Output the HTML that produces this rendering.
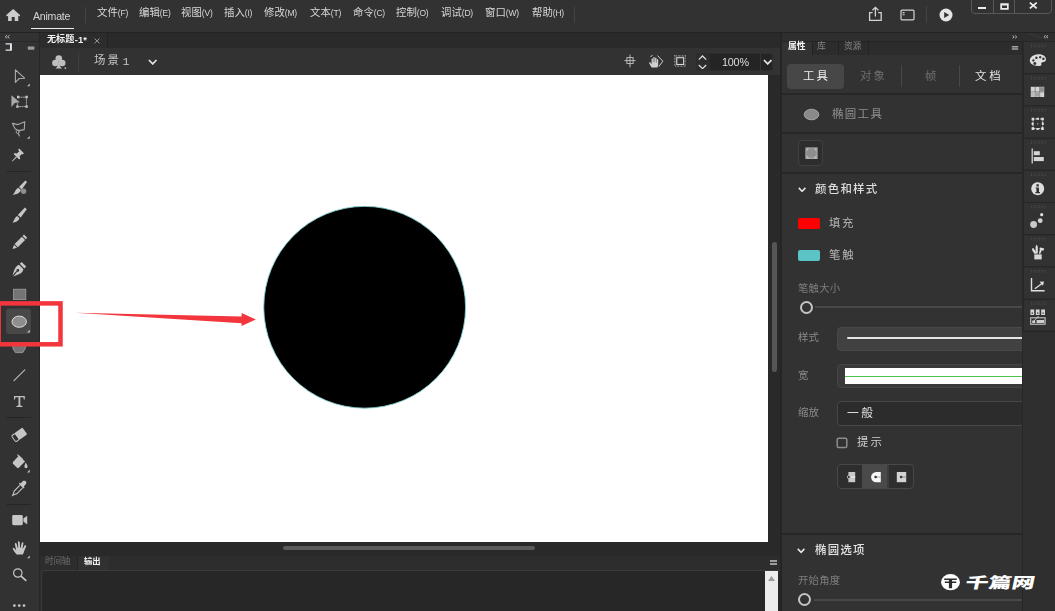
<!DOCTYPE html>
<html lang="zh-CN">
<head>
<meta charset="utf-8">
<title>Animate</title>
<style>
*{box-sizing:border-box;margin:0;padding:0}
html,body{width:1055px;height:611px;overflow:hidden;background:#323232}
body{position:relative;font-family:"Liberation Sans",sans-serif;font-size:10px;color:#d2d2d2;line-height:1}
.a{position:absolute}
.gs{will-change:transform}
.t{display:block;font-family:"Liberation Sans","Noto Sans CJK SC",sans-serif;font-style:normal;font-weight:normal;line-height:1;white-space:nowrap;color:inherit}
.hv .t{font-weight:500}
.lbl{will-change:transform;position:absolute;display:flex;align-items:center;white-space:nowrap}
.ln{position:absolute;background:#262626}
svg{display:block}
/* ---------- menu bar ---------- */
#menubar{left:0;top:0;width:1055px;height:32px;background:#323232}
.mi{will-change:transform;position:absolute;top:7.3px;height:12px;display:flex;align-items:center;color:#d8d8d8}
.mi span{font-size:8.5px;letter-spacing:-.2px;margin-left:0;position:relative;top:.5px}
/* ---------- left toolbar ---------- */
#tools{left:0;top:33px;width:40px;height:578px;background:#323232;border-right:1px solid #272727}
/* ---------- document area ---------- */
#tabstrip{left:40px;top:33px;width:741px;height:15px;background:#2a2a2a}
#scenebar{left:40px;top:48px;width:741px;height:27px;background:#323232}
#paste{left:40px;top:75px;width:741px;height:481px;background:#292929}
#stage{left:40px;top:75px;width:728px;height:467px;background:#fff;overflow:hidden}
/* ---------- bottom panel ---------- */
#bottom{left:40px;top:556px;width:741px;height:55px;background:#2e2e2e}
/* ---------- right panel ---------- */
#gap{left:780px;top:33px;width:2px;height:578px;background:#252525}
#props{left:782px;top:33px;width:240px;height:578px;background:#323232;overflow:hidden}
#strip{left:1021.6px;top:33px;width:33.4px;height:578px;background:#323232;border-left:2px solid #282828}
</style>
</head>
<body>

<!-- ======================= MENU BAR ======================= -->
<div id="menubar" class="a">
  <svg class="a" style="left:5.6px;top:9px" width="14.4" height="12.2" viewBox="0 0 14.4 12.2"><path d="M7.2 0 L0 6.3 L1 7.4 L2.1 6.5 V12.2 H5.7 V8.1 H8.7 V12.2 H12.3 V6.5 L13.4 7.4 L14.4 6.3 Z" fill="#cdcdcd"/></svg>
  <div class="a gs" id="appname" style="left:33px;top:10.5px;font-size:10.6px;color:#d4d4d4;letter-spacing:-.25px">Animate</div>
  <div class="a" style="left:30.7px;top:27.7px;width:43.2px;height:1.6px;background:#ececec"></div>
  <div class="a" style="left:85px;top:7px;width:1px;height:16px;background:#444"></div>
  <div class="mi" style="left:97.3px"><i class="t" style="font-size:10.4px;width:20.8px">文件</i><span>(F)</span></div>
  <div class="mi" style="left:138.7px"><i class="t" style="font-size:10.4px;width:20.8px">编辑</i><span>(E)</span></div>
  <div class="mi" style="left:181.3px"><i class="t" style="font-size:10.4px;width:20.8px">视图</i><span>(V)</span></div>
  <div class="mi" style="left:224.3px"><i class="t" style="font-size:10.4px;width:20.8px">插入</i><span>(I)</span></div>
  <div class="mi" style="left:264.4px"><i class="t" style="font-size:10.4px;width:20.8px">修改</i><span>(M)</span></div>
  <div class="mi" style="left:309.9px"><i class="t" style="font-size:10.4px;width:20.8px">文本</i><span>(T)</span></div>
  <div class="mi" style="left:352.5px"><i class="t" style="font-size:10.4px;width:20.8px">命令</i><span>(C)</span></div>
  <div class="mi" style="left:395.5px"><i class="t" style="font-size:10.4px;width:20.8px">控制</i><span>(O)</span></div>
  <div class="mi" style="left:440.5px"><i class="t" style="font-size:10.4px;width:20.8px">调试</i><span>(D)</span></div>
  <div class="mi" style="left:484.6px"><i class="t" style="font-size:10.4px;width:20.8px">窗口</i><span>(W)</span></div>
  <div class="mi" style="left:531.8px"><i class="t" style="font-size:10.4px;width:20.8px">帮助</i><span>(H)</span></div>
  <div class="a" style="left:574px;top:7px;width:1px;height:16px;background:#444"></div>
  <!-- share -->
  <svg class="a" style="left:868px;top:6px" width="15" height="16" viewBox="0 0 15 16" fill="none" stroke="#d2d2d2" stroke-width="1.3"><path d="M4.6 6.6 H1.6 V14.3 H13.2 V6.6 H10.2"/><path d="M7.4 10.6 V1.4 M4.4 4.2 L7.4 1.3 L10.4 4.2"/></svg>
  <!-- workspace -->
  <svg class="a" style="left:900px;top:9px" width="15" height="12" viewBox="0 0 15 12" fill="none" stroke="#d2d2d2" stroke-width="1.2"><rect x="1" y="1.2" width="13" height="9.6" rx="1"/><path d="M2.6 3.6 H4.6 M2.6 5.8 H4.6" stroke-width="1.1"/></svg>
  <div class="a" style="left:926px;top:6px;width:1px;height:17px;background:#444"></div>
  <!-- play -->
  <svg class="a" style="left:938.6px;top:7.5px" width="14" height="14" viewBox="0 0 14 14"><circle cx="7" cy="7" r="6.5" fill="#e4e4e4"/><path d="M5.2 3.9 L10.2 7 L5.2 10.1 Z" fill="#323232"/></svg>
  <!-- window controls -->
  <div class="a" style="left:970.5px;top:-2px;width:81px;height:15.6px;border:1px solid #585858;border-radius:0 0 4px 4px"></div>
  <div class="a" style="left:993px;top:0;width:1px;height:13px;background:#585858"></div>
  <div class="a" style="left:1014px;top:0;width:1px;height:13px;background:#585858"></div>
  <div class="a" style="left:978px;top:6.6px;width:8.4px;height:2.4px;background:#ededed"></div>
  <svg class="a" style="left:999.6px;top:2.6px" width="9" height="7" viewBox="0 0 9 7"><path fill-rule="evenodd" d="M.3 .2 H8.7 V6.7 H.3 Z M2 2.6 V5 H7 V2.6 Z" fill="#ededed"/></svg>
  <svg class="a" style="left:1029.2px;top:2.4px" width="8.6" height="7.2" viewBox="0 0 10 8" fill="none" stroke="#ededed" stroke-width="2.1"><path d="M1 .6 L9 7.2 M9 .6 L1 7.2"/></svg>
</div>
<div class="ln" style="left:0;top:32px;width:1055px;height:1px;background:#232323"></div>

<!-- ======================= LEFT TOOLBAR ======================= -->
<div id="tools" class="a">
  <svg class="a" style="left:0;top:0" width="40" height="578" viewBox="0 33 40 578">
    <g fill="none" stroke="#c6c6c6" stroke-width="1.1" stroke-linejoin="round" stroke-linecap="round">
      <!-- collapse chevrons -->
      <path d="M6.8 35.5 L5.2 36.8 L6.8 38.1 M9.2 35.5 L7.6 36.8 L9.2 38.1" stroke-width=".9" stroke="#bdbdbd"/>
      <!-- selection (outline arrow) -->
      <path d="M15.4 69.8 L24.6 78.2 L19.2 78.5 L15.4 82.4 Z" stroke="#adadad"/>
      <!-- free transform -->
      <path d="M18.2 97.2 H26.4 V106.6 H17.4 V103.5" stroke-dasharray="1.4 1.2" stroke="#ababab" stroke-width=".9"/>
      <!-- lasso -->
      <path d="M12.4 123.4 L18 124.6 L24.8 121.8 L24.2 129.6 L18.8 130.6 L15.2 129 Z" stroke="#a9a9a9"/>
      <circle cx="17.6" cy="132" r="1.5" stroke="#a9a9a9" stroke-width=".9"/>
      <path d="M18.2 133.4 L19.4 136" stroke="#a9a9a9"/>
      <!-- line tool -->
      <path d="M14 380.6 L24.8 369.8" stroke-width="1.2" stroke="#b4b4b4"/>
      <!-- magnifier -->
      <circle cx="17.8" cy="573" r="4.2" stroke-width="1.2"/>
      <path d="M21 576.2 L25.8 580.4" stroke-width="1.7"/>
    </g>
    <g fill="#c6c6c6">
      <!-- toggle icons -->
      <path d="M5.6 43.2 H11.9 V50.8 H5.6 V49.4 H10 V44.6 H5.6 Z" fill="#e2e6ee"/>
      <rect x="27.8" y="46.6" width="6.6" height="3.1" rx=".6" fill="#9a9a9a"/>
      <!-- sub-tool corner triangles -->
      <path d="M29.8 83.4 V86.2 H27 Z M29.8 136 V138.8 H27 Z M29.8 329.8 V332.6 H27 Z M29.8 469.6 V472.4 H27 Z M29.8 555.4 V558.2 H27 Z" fill="#b8b8b8"/>
      <!-- free transform: arrow + handles -->
      <path d="M11.4 95.2 L19.8 102.2 L14.8 102.9 L11.4 106.9 Z" fill="#a9a9a9"/>
      <path d="M17 95.8 h2.4 v2.4 h-2.4z M25.4 95.8 h2.4 v2.4 h-2.4z M25.4 105.4 h2.4 v2.4 h-2.4z M16.2 105.4 h2.4 v2.4 h-2.4z"/>
      <!-- pin -->
      <path d="M19.2 148.6 L23.9 153.3 L22.7 154.5 L21.9 153.9 L19.6 156.3 L20.3 158.5 L19.2 159.6 L13.6 154 L14.7 152.9 L16.9 153.6 L19.3 151.3 L18.1 149.8 Z"/>
      <path d="M16 156.4 L16.9 157.3 L12.4 161.4 L11.9 160.9 Z"/>
      <!-- fluid brush -->
      <circle cx="23.6" cy="191.2" r="2.7" fill="#8e8e8e"/>
      <path d="M25.4 180.6 L27 182 L21.7 189.5 L19 187.1 Z"/>
      <path d="M18.3 187.7 L21 190.1 C19.8 193.4 16.4 194.9 12.7 194.7 C14.9 192.9 15.1 189.5 18.3 187.7 Z"/>
      <!-- brush -->
      <path d="M24.9 207.6 L26.8 209.2 L20.7 217.5 L17.8 215 Z"/>
      <path d="M17.1 216.1 L19.5 218.2 C18.6 221 15.6 222.4 12.5 222.4 C14.6 220.7 14.4 217.7 17.1 216.1 Z"/>
      <!-- pencil -->
      <path d="M24 234.6 L27.2 237.8 L25.8 239.2 L22.6 236 Z M21.9 236.7 L25.1 239.9 L17.8 247.2 L14.6 244 Z M14 244.8 L17 247.8 L12.5 249 Z"/>
      <!-- pen -->
      <path d="M21.6 262 L26.2 266.6 L24.4 268.4 L19.8 263.8 Z"/>
      <path d="M19 264.8 L23.4 269.2 C22.6 272.6 20.4 274 13.2 276.4 L17.4 271.6 A1.3 1.3 0 1 0 16.6 270.8 L12.4 275.6 C14.6 268.6 16 266 19 264.8 Z"/>
      <!-- rectangle tool -->
      <rect x="13.4" y="289.2" width="12.4" height="10.4" fill="#747474" stroke="#9c9c9c" stroke-width=".8"/>
      <!-- text tool -->
      <path d="M14 396 H24.8 V399.4 H23.8 L23.4 397.3 H20.3 V405.6 L22.4 406.1 V407.1 H16.4 V406.1 L18.5 405.6 V397.3 H15.4 L15 399.4 H14 Z" fill="#c0c0c0"/>
      <!-- eraser -->
      <g transform="rotate(-36 19.4 434.8)"><rect x="16.3" y="430.6" width="9.8" height="8.4" rx="1.2"/><rect x="12.3" y="431.1" width="4.6" height="7.4" rx="1.2" fill="none" stroke="#c6c6c6" stroke-width="1"/></g>
      <!-- paint bucket -->
      <path d="M13 462 L19 455.6 L25 461.4 L18.8 467.8 Q17.8 468.6 16.8 467.6 L13 463.8 Q12.4 462.8 13 462 Z"/>
      <path d="M17.4 454.6 L22.6 459.4" fill="none" stroke="#c6c6c6" stroke-width="1.1"/>
      <path d="M25.6 462.4 C26.8 464.4 27.6 465.4 27.6 466.6 A1.6 1.6 0 0 1 24.4 466.6 C24.4 465.4 25 464.4 25.6 462.4 Z"/>
      <!-- eyedropper -->
      <path d="M23.6 480.8 Q25.4 480.4 26.2 481.8 Q26.8 483.4 25.6 484.6 L23.8 486.4 L24.6 487.2 L23.4 488.4 L18.8 483.8 L20 482.6 L20.8 483.4 L22.4 481.6 Q23 481 23.6 480.8 Z"/>
      <path d="M19.8 485.4 L14.2 491 L13.4 493.6 L12.6 495.4 L14.4 494.6 L16.8 493.8 L22.4 488.2" fill="none" stroke="#c6c6c6" stroke-width="1.1"/>
      <!-- camera -->
      <rect x="12.2" y="515" width="10.6" height="10.2" rx="1.4"/>
      <path d="M23.4 518.6 L27.2 515.8 V524.4 L23.4 521.6 Z"/>
      <!-- hand -->
      <path d="M16.6 554.6 C15.2 552.8 14 551.2 12.8 549.2 C12.3 548.2 13.7 547.4 14.5 548.4 L16.2 550.4 L14.9 544.2 C14.6 543 16.3 542.6 16.6 543.8 L17.8 548 L18.2 547.9 L17.9 542.3 C17.8 541.1 19.6 541 19.7 542.2 L20.1 547.8 L20.6 547.8 L21.7 542.9 C22 541.7 23.7 542.1 23.4 543.3 L22.5 548.4 L22.9 548.6 L24.6 545.6 C25.2 544.6 26.6 545.4 26.1 546.5 L24.2 551 C23.8 552.6 23.4 553.6 22.8 554.6 Z"/>
      <!-- more -->
      <circle cx="14.4" cy="605.6" r="1.35"/><circle cx="19.2" cy="605.6" r="1.35"/><circle cx="24" cy="605.6" r="1.35"/>
    </g>
    <!-- selected tool (oval) -->
    <rect x="6.1" y="308.6" width="24.8" height="25.4" rx="3" fill="#484848"/>
    <ellipse cx="19.2" cy="321.7" rx="7.2" ry="5.6" fill="#8e8e8e" stroke="#dedede" stroke-width="1"/>
    <path d="M29.8 329.8 V332.6 H27 Z" fill="#c0c0c0"/>
    <!-- polystar (mostly hidden behind highlight) -->
    <path d="M12.9 343.6 H25.3 V348.4 L22.8 352.6 H15.4 L12.9 348.4 Z" fill="#747474" stroke="#a4a4a4" stroke-width=".8"/>
    <!-- separators -->
    <path d="M0 41.5 H40" stroke="#282828" stroke-width="1"/>
    <path d="M6.5 171.5 H31 M6.5 417.5 H31 M6.5 504.5 H31" stroke="#252525" stroke-width="1.1"/>
  </svg>
</div>

<!-- ======================= DOCUMENT AREA ======================= -->
<div id="tabstrip" class="a">
  <div class="a" style="left:0;top:0;width:68px;height:15px;background:#2c2c2c;border-right:1px solid #222"></div>
  <div class="lbl" style="left:7.4px;top:2.2px;height:9px;color:#f2f2f2"><i class="t" style="font-size:9.1px;font-weight:bold;width:27.3px">无标题</i><span style="font-weight:bold;font-size:9.4px;margin-left:.4px;letter-spacing:.1px;position:relative;top:.2px">-1*</span></div>
  <svg class="a" style="left:54.4px;top:5.2px" width="6" height="6" viewBox="0 0 6 6" fill="none" stroke="#a6a6a6" stroke-width=".9"><path d="M.5 .5 L5.5 5.3 M5.5 .5 L.5 5.3"/></svg>
</div>
<div id="scenebar" class="a">
  <svg class="a" style="left:12.4px;top:7.4px" width="14.4" height="14" viewBox="0 0 14.4 14"><g fill="#bebebe"><circle cx="6.8" cy="3.5" r="3.3"/><circle cx="3.4" cy="8" r="3.3"/><circle cx="10.2" cy="8" r="3.3"/><path d="M6.2 7 H7.4 C7.4 10.4 8.2 12 10 13.4 H3.6 C5.4 12 6.2 10.4 6.2 7 Z"/><rect x="12.6" y="12.4" width="1.5" height="1.5"/></g></svg>
  <div class="a" style="left:38px;top:4.5px;width:1px;height:18px;background:#404040"></div>
  <div class="lbl" style="left:54.2px;top:7.3px;height:12px;color:#c6c6c6"><i class="t" style="font-size:11.4px;letter-spacing:2.2px;width:25px">场景</i><span style="font-family:'Liberation Mono',monospace;font-size:11.5px;margin-left:3.6px;position:relative;top:.4px">1</span></div>
  <svg class="a" style="left:108.4px;top:11px" width="9.4" height="6.4" viewBox="0 0 9.4 6.4" fill="none" stroke="#e2e2e2" stroke-width="1.7"><path d="M.9 1 L4.7 4.9 L8.5 1"/></svg>
  <!-- centre stage -->
  <svg class="a" style="left:583.6px;top:6.4px" width="12" height="13.6" viewBox="0 0 12 13.6" fill="none" stroke="#c4c4c4" stroke-width=".9"><rect x="2.9" y="3.6" width="6.2" height="6"/><path d="M6 .6 V13.4 M.4 6.6 H11.6"/></svg>
  <!-- rotate / hand -->
  <svg class="a" style="left:607.6px;top:6.4px" width="16" height="14" viewBox="0 0 16 14"><path d="M3.6 13.6 C2.8 12 2 10.8 1.2 9.2 C.9 8.4 2 7.8 2.6 8.7 L3.6 10.2 V5 C3.6 4 4.9 4 4.9 5 V8.2 H5.3 V3.7 C5.3 2.7 6.7 2.7 6.7 3.7 V8.2 H7.1 V4.3 C7.1 3.3 8.5 3.3 8.5 4.3 V8.5 H8.9 V5.8 C8.9 4.8 10.2 4.8 10.2 5.8 V10.6 C10.2 12 9.7 12.8 9.2 13.6 Z" fill="#cfcfcf"/><path d="M9.6 1.6 L14.8 7.2 L10.8 12.6" fill="none" stroke="#cfcfcf" stroke-width="1"/><path d="M2.6 3 L4.6 .9" fill="none" stroke="#cfcfcf" stroke-width="1"/></svg>
  <!-- clip content -->
  <svg class="a" style="left:634px;top:7.4px" width="12.4" height="12.2" viewBox="0 0 13.6 13.2" fill="none"><rect x=".9" y=".9" width="11.8" height="11.4" stroke="#8e8e8e" stroke-width="1.8" stroke-dasharray=".8 .8"/><rect x="3" y="2.9" width="7.6" height="7.4" stroke="#d8d8d8" stroke-width="1.2"/></svg>
  <!-- zoom spinner + box -->
  <div class="a" style="left:656px;top:5px;width:14px;height:17.6px;background:#2c2c2c;border-radius:3px 0 0 3px"></div>
  <svg class="a" style="left:657.8px;top:6.6px" width="9" height="14.6" viewBox="0 0 9 14.6" fill="none" stroke="#dcdcdc" stroke-width="1.3"><path d="M.8 4.6 L4.5 1 L8.2 4.6 M.8 10 L4.5 13.6 L8.2 10"/></svg>
  <div class="a" style="left:669.4px;top:5px;width:63.6px;height:17.6px;background:#242424;border-radius:3px;border:1px solid #2d2d2d"></div>
  <div class="a" style="left:720px;top:5.4px;width:1px;height:16.8px;background:#353535"></div>
  <div class="a gs" id="zoomtxt" style="left:682px;top:8.6px;font-size:10.8px;color:#dedede;letter-spacing:-.2px">100%</div>
  <svg class="a" style="left:722.6px;top:11px" width="9.4" height="6.4" viewBox="0 0 9.4 6.4" fill="none" stroke="#e6e6e6" stroke-width="1.7"><path d="M.9 1 L4.7 4.9 L8.5 1"/></svg>
</div>
<div id="paste" class="a">
  <div class="a" style="left:732px;top:167px;width:5px;height:130px;background:#565656;border-radius:2.5px"></div>
  <div class="a" style="left:242.5px;top:470.6px;width:252px;height:4px;background:#5a5a5a;border-radius:2px"></div>
</div>
<div id="stage" class="a">
  <svg class="a" style="left:0;top:0" width="728" height="467" viewBox="40 75 728 467">
    <circle cx="364.65" cy="307.25" r="100.9" fill="#000" stroke="#86d2d2" stroke-width=".9"/>
    <path d="M75 312.8 L241.6 316.6 L241.7 313 L255.8 319.4 L241.5 326.1 L241.6 323.2 Z" fill="#f3363d"/>
  </svg>
</div>

<!-- ======================= BOTTOM PANEL ======================= -->
<div id="bottom" class="a">
  <div class="a" style="left:0;top:0;width:741px;height:14px;background:#2d2d2d"></div>
  <div class="a" style="left:37.4px;top:0;width:32px;height:14.6px;background:#313131;border-left:1px solid #252525"></div>
  <div class="lbl" style="left:5.4px;top:.2px;height:10px;color:#6c6c6c"><i class="t" style="font-size:8.6px;letter-spacing:-.2px;width:25.4px">时间轴</i></div>
  <div class="lbl" style="left:43.6px;top:.2px;height:10px;color:#f4f4f4"><i class="t" style="font-size:8.4px;font-weight:bold;letter-spacing:-.2px;width:16.6px">输出</i></div>
  <div class="a" style="left:730.4px;top:4px;width:7px;height:1.6px;background:#9c9c9c"></div>
  <div class="a" style="left:730.4px;top:7px;width:7px;height:1.6px;background:#9c9c9c"></div>
  <div class="a" style="left:1px;top:14px;width:740px;height:41px;background:#272727;border-top:1px solid #3c3c3c;border-left:1px solid #3a3a3a;border-top-left-radius:4px"></div>
  <div class="a" style="left:725px;top:15px;width:13px;height:40px;background:#ececec"></div>
  <svg class="a" style="left:728px;top:19.6px" width="7" height="5" viewBox="0 0 7 5"><path d="M3.5 0 L7 5 H0 Z" fill="#9a9a9a"/></svg>
</div>

<!-- ======================= RIGHT PANEL ======================= -->
<div id="gap" class="a"></div>
<div id="props" class="a">
  <div class="a" style="left:0px;top:0px;width:240px;height:8px;background:#2e2e2e"></div>
  <div class="a" style="left:0px;top:8px;width:240px;height:1px;background:#242424"></div>
  <div class="a" style="left:0px;top:9px;width:240px;height:13px;background:#2c2c2c"></div>
  <div class="a" style="left:0px;top:9px;width:30px;height:13.4px;background:#323232"></div>
  <div class="a" style="left:30px;top:9px;width:1px;height:13px;background:#222"></div>
  <div class="a" style="left:56px;top:9px;width:1px;height:13px;background:#222"></div>
  <div class="a" style="left:86px;top:9px;width:1px;height:13px;background:#242424"></div>
  <svg class="a" style="left:230px;top:2px" width="6" height="4" viewBox="0 0 6 4" fill="none" stroke="#c4c4c4" stroke-width=".9"><path d="M.6 .5 L2.2 1.9 L.6 3.3 M3.2 .5 L4.8 1.9 L3.2 3.3"/></svg>
  <div class="lbl" style="left:5.6px;top:9.4px;height:9px;color:#f6f6f6"><i class="t" style="font-size:8.8px;font-weight:bold;width:17.6px">属性</i></div>
  <div class="lbl" style="left:34.6px;top:9.4px;height:9px;color:#858585"><i class="t" style="font-size:8.8px;width:8.8px">库</i></div>
  <div class="lbl" style="left:62.2px;top:9.4px;height:9px;color:#858585"><i class="t" style="font-size:8.8px;letter-spacing:-.3px;width:17.3px">资源</i></div>
  <svg class="a" style="left:229px;top:12px" width="8" height="6" viewBox="1011 45 8 6"><path d="M1011.8 45.9 h6.4 v1.5 h-6.4z M1011.8 48.3 h6.4 v1.5 h-6.4z" fill="#a4a4a4"/></svg>
  <div class="a" style="left:5px;top:30.8px;width:57.4px;height:25px;background:#474747;border-radius:4px"></div>
  <div class="a" style="left:119.4px;top:32px;width:1px;height:22px;background:#484848"></div>
  <div class="a" style="left:177.4px;top:32px;width:1px;height:22px;background:#484848"></div>
  <div class="lbl" style="left:21.3px;top:37.8px;height:12px;color:#efefef"><i class="t" style="font-size:11.4px;letter-spacing:2.2px;width:25px">工具</i></div>
  <div class="lbl" style="left:78.3px;top:37.8px;height:12px;color:#6f6f6f"><i class="t" style="font-size:11.4px;letter-spacing:2.2px;width:25px">对象</i></div>
  <div class="lbl" style="left:142.8px;top:37.8px;height:12px;color:#6f6f6f"><i class="t" style="font-size:11.4px;width:11.4px">帧</i></div>
  <div class="lbl" style="left:193.2px;top:37.8px;height:12px;color:#e4e4e4"><i class="t" style="font-size:11.4px;letter-spacing:2.8px;width:25.6px">文档</i></div>
  <div class="a" style="left:0px;top:60.4px;width:240px;height:1.6px;background:#272727"></div>
  <svg class="a" style="left:21px;top:75px" width="17" height="13" viewBox="0 0 17 13"><ellipse cx="8.5" cy="6.5" rx="7.3" ry="5.3" fill="#8a8a8a" stroke="#b4b4b4" stroke-width=".8"/></svg>
  <div class="lbl" style="left:50.3px;top:75.6px;height:12px;color:#8f8f8f"><i class="t" style="font-size:11.5px;letter-spacing:1.3px;width:49.9px">椭圆工具</i></div>
  <div class="a" style="left:0px;top:99.2px;width:240px;height:1.6px;background:#272727"></div>
  <div class="a" style="left:16.2px;top:107.2px;width:25px;height:25.6px;background:#2d2d2d;border:1px solid #414141;border-radius:4px"></div>
  <svg class="a" style="left:22.7px;top:114.3px" width="13" height="12.4" viewBox="0 0 13 12.4"><rect x=".5" y=".5" width="12" height="11.4" fill="#cdcdcd"/><rect x="1.3" y="1.3" width="10.4" height="9.8" fill="none" stroke="#8c8c8c" stroke-width=".6"/><ellipse cx="6.5" cy="6.2" rx="5.2" ry="4.9" fill="#8e8e8e"/></svg>
  <div class="a" style="left:0px;top:139px;width:240px;height:1.6px;background:#272727"></div>
  <svg class="a" style="left:15.6px;top:153.8px" width="8.2" height="5.6" viewBox="0 0 9.4 6.4" fill="none" stroke="#e6e6e6" stroke-width="1.8"><path d="M.9 1 L4.7 4.9 L8.5 1"/></svg>
  <div class="lbl hv" style="left:32.6px;top:150.8px;height:12px;color:#dedede"><i class="t" style="font-size:11.4px;letter-spacing:1.3px;width:62.2px">颜色和样式</i></div>
  <div class="a" style="left:16.3px;top:185.3px;width:22px;height:11px;background:#ff0000;border-radius:1.5px"></div>
  <div class="lbl" style="left:47.4px;top:185.4px;height:12px;color:#b6b6b6"><i class="t" style="font-size:11.4px;letter-spacing:1.7px;width:24.5px">填充</i></div>
  <div class="a" style="left:16.3px;top:217px;width:22px;height:10.8px;background:#5cc4c6;border-radius:2px"></div>
  <div class="lbl" style="left:47.4px;top:216.8px;height:12px;color:#b6b6b6"><i class="t" style="font-size:11.4px;letter-spacing:1.9px;width:24.7px">笔触</i></div>
  <div class="lbl" style="left:16px;top:250.8px;height:11px;color:#7d7d7d"><i class="t" style="font-size:10.4px;letter-spacing:.2px;width:42.2px">笔触大小</i></div>
  <div class="a" style="left:33.4px;top:273px;width:210px;height:2px;background:#484848"></div>
  <div class="a" style="left:17.7px;top:267.8px;width:13px;height:13px;border:2px solid #c4c4c4;border-radius:50%"></div>
  <div class="lbl" style="left:16px;top:300px;height:11px;color:#8a8a8a"><i class="t" style="font-size:10.4px;letter-spacing:.2px;width:21px">样式</i></div>
  <div class="a" style="left:54.9px;top:293.5px;width:200px;height:24.4px;background:#414141;border:1px solid #484848;border-radius:4px"></div>
  <div class="a" style="left:64.6px;top:304px;width:190px;height:2px;background:#e6e6e6;border-radius:1px"></div>
  <div class="lbl" style="left:16px;top:337.6px;height:11px;color:#8a8a8a"><i class="t" style="font-size:10.4px;width:10.4px">宽</i></div>
  <div class="a" style="left:54.9px;top:330.6px;width:200px;height:24.8px;background:#3a3a3a;border:1px solid #464646;border-radius:4px"></div>
  <div class="a" style="left:62.7px;top:335.3px;width:190px;height:15.7px;background:#ffffff"></div>
  <div class="a" style="left:62.7px;top:342.5px;width:190px;height:1.6px;background:#4cc44c"></div>
  <div class="lbl" style="left:15.6px;top:374.8px;height:11px;color:#8a8a8a"><i class="t" style="font-size:10.4px;letter-spacing:.2px;width:21px">缩放</i></div>
  <div class="a" style="left:54.9px;top:367.9px;width:200px;height:25.6px;background:#2c2c2c;border:1px solid #474747;border-radius:4px"></div>
  <div class="lbl" style="left:64.8px;top:375.2px;height:12px;color:#e0e0e0"><i class="t" style="font-size:11.8px;letter-spacing:2.4px;width:26px">一般</i></div>
  <svg class="a" style="left:54.4px;top:403.5px" width="12" height="12" viewBox="0 0 12 12"><rect x="1.2" y="1.2" width="9.6" height="9.4" rx="1.4" fill="none" stroke="#8c8c8c" stroke-width="1.5"/></svg>
  <div class="lbl" style="left:74.6px;top:403.6px;height:12px;color:#d0d0d0"><i class="t" style="font-size:11.4px;letter-spacing:2px;width:24.8px">提示</i></div>
  <div class="a" style="left:54.8px;top:431px;width:77.2px;height:24.8px;background:#2e2e2e;border:1px solid #484848;border-radius:4px"></div>
  <div class="a" style="left:80px;top:431.6px;width:25px;height:23.8px;background:#4a4a4a"></div>
  <div class="a" style="left:105px;top:431.6px;width:1.6px;height:23.8px;background:#3c3c3c"></div>
  <svg class="a" style="left:64px;top:438px" width="64" height="12" viewBox="846 471 64 12">
    <rect x="848.4" y="472" width="6.8" height="10.2" fill="#c9c9c9"/><rect x="850.4" y="476.3" width="4.8" height="1.4" fill="#e8e8e8"/><circle cx="848.8" cy="477" r="1.5" fill="#2e2e2e" stroke="#d8d8d8" stroke-width=".7"/>
    <path d="M880.8 471.9 H876.2 A5.15 5.15 0 0 0 876.2 482.2 H880.8 Z" fill="#f6f6f6"/><rect x="875.6" y="476.4" width="5.2" height="1.3" fill="#b8b8b8"/><circle cx="875.6" cy="477" r="1.3" fill="#333"/>
    <rect x="896.8" y="472" width="9.4" height="10.2" fill="#d2d2d2"/><rect x="901" y="476.4" width="5.2" height="1.3" fill="#9c9c9c"/><circle cx="901.1" cy="477" r="1.3" fill="#333"/>
  </svg>
  <div class="a" style="left:0px;top:500.2px;width:240px;height:1.4px;background:#272727"></div>
  <svg class="a" style="left:15.3px;top:515px" width="8.2" height="5.6" viewBox="0 0 9.4 6.4" fill="none" stroke="#e6e6e6" stroke-width="1.8"><path d="M.9 1 L4.7 4.9 L8.5 1"/></svg>
  <div class="lbl hv" style="left:32.8px;top:512.2px;height:12px;color:#e2e2e2"><i class="t" style="font-size:11.4px;letter-spacing:1.3px;width:49.5px">椭圆选项</i></div>
  <div class="lbl" style="left:16px;top:542.6px;height:11px;color:#7d7d7d"><i class="t" style="font-size:10.4px;letter-spacing:.2px;width:42.2px">开始角度</i></div>
  <div class="a" style="left:32px;top:566px;width:212px;height:2px;background:#484848"></div>
  <div class="a" style="left:16.2px;top:560.2px;width:13px;height:13px;border:2px solid #c4c4c4;border-radius:50%"></div>
</div>
<div id="strip" class="a">
  <svg class="a" style="left:-.6px;top:0" width="32" height="578" viewBox="1023 33 32 578">
    <rect x="1023" y="33" width="32" height="8" fill="#2e2e2e"/>
    <rect x="1023" y="331.6" width="32" height="280" fill="#2f2f2f"/>
    <path d="M1045.6 35.4 L1044 36.7 L1045.6 38 M1048 35.4 L1046.4 36.7 L1048 38" fill="none" stroke="#c8c8c8" stroke-width=".9"/>
    <path d="M1023 41.5 H1055 M1023 73.7 H1055 M1023 105.9 H1055 M1023 138.1 H1055 M1023 170.3 H1055 M1023 202.5 H1055 M1023 234.7 H1055 M1023 266.9 H1055 M1023 299.1 H1055 M1023 331.3 H1055" stroke="#262626" stroke-width="1.2"/>
    <path d="M1031.6 44.6 v3.2 M1034.3 44.6 v3.2 M1037 44.6 v3.2 M1039.7 44.6 v3.2 M1042.4 44.6 v3.2 M1045.1 44.6 v3.2 M1031.6 76.8 v3.2 M1034.3 76.8 v3.2 M1037 76.8 v3.2 M1039.7 76.8 v3.2 M1042.4 76.8 v3.2 M1045.1 76.8 v3.2 M1031.6 109 v3.2 M1034.3 109 v3.2 M1037 109 v3.2 M1039.7 109 v3.2 M1042.4 109 v3.2 M1045.1 109 v3.2 M1031.6 141.2 v3.2 M1034.3 141.2 v3.2 M1037 141.2 v3.2 M1039.7 141.2 v3.2 M1042.4 141.2 v3.2 M1045.1 141.2 v3.2 M1031.6 173.4 v3.2 M1034.3 173.4 v3.2 M1037 173.4 v3.2 M1039.7 173.4 v3.2 M1042.4 173.4 v3.2 M1045.1 173.4 v3.2 M1031.6 205.6 v3.2 M1034.3 205.6 v3.2 M1037 205.6 v3.2 M1039.7 205.6 v3.2 M1042.4 205.6 v3.2 M1045.1 205.6 v3.2 M1031.6 237.8 v3.2 M1034.3 237.8 v3.2 M1037 237.8 v3.2 M1039.7 237.8 v3.2 M1042.4 237.8 v3.2 M1045.1 237.8 v3.2 M1031.6 270 v3.2 M1034.3 270 v3.2 M1037 270 v3.2 M1039.7 270 v3.2 M1042.4 270 v3.2 M1045.1 270 v3.2 M1031.6 302.2 v3.2 M1034.3 302.2 v3.2 M1037 302.2 v3.2 M1039.7 302.2 v3.2 M1042.4 302.2 v3.2 M1045.1 302.2 v3.2" stroke="#4c4c4c" stroke-width="1.1" stroke-dasharray="1 .6"/>
    <g fill="#dedede">
      <!-- colour palette -->
      <path fill-rule="evenodd" d="M1038.6 54.2 C1043.2 54.2 1046.2 56.6 1046 59.4 C1045.8 61.8 1043.6 62 1042.4 62.2 C1041.2 62.4 1041.2 63.4 1041.4 64.2 C1041.6 65.4 1040.4 66 1038.2 66 C1033.4 66 1029.8 63.8 1029.8 60.6 C1029.8 57.2 1033.6 54.2 1038.6 54.2 Z M1033.4 59.2 a1.2 1.2 0 1 0 .01 0 Z M1036.4 56.6 a1.2 1.2 0 1 0 .01 0 Z M1040.2 56 a1.2 1.2 0 1 0 .01 0 Z M1043.4 57.6 a1.2 1.2 0 1 0 .01 0 Z M1034.8 62 a1.5 1.5 0 1 0 .01 0 Z"/>
      <!-- swatches -->
      <rect x="1030.8" y="86.8" width="13.4" height="10.2" fill="#d4d4d4"/>
      <path d="M1030.8 91.9 H1044.2 M1035.2 86.8 V97 M1039.7 86.8 V97" stroke="#6a6a6a" stroke-width=".7"/>
      <rect x="1040" y="87.2" width="3.8" height="4.2" fill="#8c8c8c"/><rect x="1035.6" y="92.4" width="3.8" height="4.2" fill="#a4a4a4"/><rect x="1031.2" y="92.4" width="3.8" height="4.2" fill="#bcbcbc"/>
      <!-- transform -->
      <rect x="1033" y="119" width="9.6" height="9.6" fill="none" stroke="#d8d8d8" stroke-width="1" stroke-dasharray="1.4 1"/>
      <path d="M1031.6 117.7 h2.6 v2.6 h-2.6z M1041.2 117.7 h2.6 v2.6 h-2.6z M1031.6 127.3 h2.6 v2.6 h-2.6z M1041.2 127.3 h2.6 v2.6 h-2.6z M1036.5 117.7 h2.4 v2 h-2.4z M1036.5 127.9 h2.4 v2 h-2.4z M1031.6 122.6 h2 v2.4 h-2z M1041.8 122.6 h2 v2.4 h-2z"/>
      <circle cx="1037.7" cy="123.8" r=".8" fill="#9a9a9a"/>
      <!-- align -->
      <rect x="1031.6" y="148.5" width="1.2" height="15" />
      <rect x="1033.8" y="151.2" width="6" height="4" fill="#d6d6d6"/><rect x="1033.8" y="157" width="10" height="4.1" fill="#d6d6d6"/>
      <!-- info -->
      <circle cx="1037.7" cy="188.7" r="6.5"/>
      <path d="M1036.4 184.2 h2.4 v2.2 h-2.4z M1035.6 187.4 h3.4 v4.6 h1 v1.2 h-4.6 v-1.2 h1 v-3.4 h-.8z" fill="#323232"/>
      <!-- motion presets -->
      <circle cx="1041.7" cy="214.7" r="1.6"/><circle cx="1040.2" cy="220.7" r="2.4" fill="#d2d2d2"/><circle cx="1033.6" cy="224.5" r="3.4" fill="#c8c8c8"/>
      <!-- brush library -->
      <rect x="1034.3" y="254.4" width="7.4" height="5" fill="#d8d8d8"/>
      <path d="M1036.6 244.6 L1037.8 246.8 V253.6 H1035.6 V246.8 Z M1033.2 248 L1035 250.2 L1036 253.8 H1034.4 L1032.4 250.8 L1032 248.6 Z M1040.6 247.4 L1044.2 248.6 L1043.6 250.6 L1041.6 250.6 L1040.4 253.8 H1038.8 L1039.8 250 L1039.6 248 Z"/>
      <!-- graph -->
      <path d="M1030.8 277.9 h1.4 v12.1 h12.4 v1.4 h-13.8z"/>
      <path d="M1034.4 288.2 L1041 283.6 L1039.6 281.8 L1044 281.4 L1043 285.8 L1041.8 284.6 L1035.2 289.2 Z"/>
      <!-- scenes / grid -->
      <path d="M1030.4 309.4 h3.8 v5.6 h-3.8z M1035.8 309.4 h3.8 v5.6 h-3.8z M1041.2 309.4 h3.8 v5.6 h-3.8z" fill="#d6d6d6"/>
      <path d="M1031.6 312.4 h1.4 v1.4 h-1.4z M1037 312.4 h1.4 v1.4 h-1.4z M1042.4 312.4 h1.4 v1.4 h-1.4z" fill="#3a3a3a"/>
      <rect x="1030.7" y="317.8" width="14.4" height="6.4" fill="none" stroke="#d6d6d6" stroke-width="1"/>
      <path d="M1032.2 320.4 h3 v2.6 h-3z M1036.6 320 h7.6 v3 h-7.6z" fill="#cfcfcf"/>
      <path d="M1033.4 321.6 L1038.6 316" stroke="#d6d6d6" stroke-width=".9"/>
    </g>
  </svg>
</div>

<svg class="a" style="left:1020px;top:33px" width="35" height="8" viewBox="1020 33 35 8"><rect x="1020" y="33" width="35" height="8" fill="#2e2e2e"/><path d="M1027 33.2 L1050 40.4" stroke="#3b3b3b" stroke-width=".8"/><path d="M1045.6 35.4 L1044 36.7 L1045.6 38 M1048 35.4 L1046.4 36.7 L1048 38" fill="none" stroke="#c8c8c8" stroke-width=".9"/></svg>
<!-- red highlight rectangle over the toolbar (annotation) -->
<svg class="a" style="left:0;top:298px" width="70" height="54" viewBox="0 298 70 54">
  <rect x="-1.3" y="303.4" width="61.8" height="40.9" fill="none" stroke="#f3353c" stroke-width="4.5"/>
</svg>
<div class="a" id="wm" style="left:940px;top:573px;width:100px;height:20px">
  <svg class="a" style="left:.7px;top:1.3px" width="19" height="16.4" viewBox="0 0 19 16.4"><ellipse cx="9.5" cy="8.2" rx="9.45" ry="8.15" fill="#fff"/><path d="M3.2 4.4 H15.8 V6.1 H3.2 Z M3.8 7.6 H8 V9 H3.8 Z M11 7.6 H15.2 V9 H11 Z M7.9 6.1 H11.1 V14.2 H7.9 Z" fill="#2b2b2b"/></svg>
  <div class="a" style="left:23.6px;top:2px;color:#fff;transform-origin:0 100%;transform:skewX(-12deg) scale(1.5,.97)"><i class="t" style="font-size:15.4px;font-weight:900;width:46.2px">千篇网</i></div>
</div>
</body>
</html>
